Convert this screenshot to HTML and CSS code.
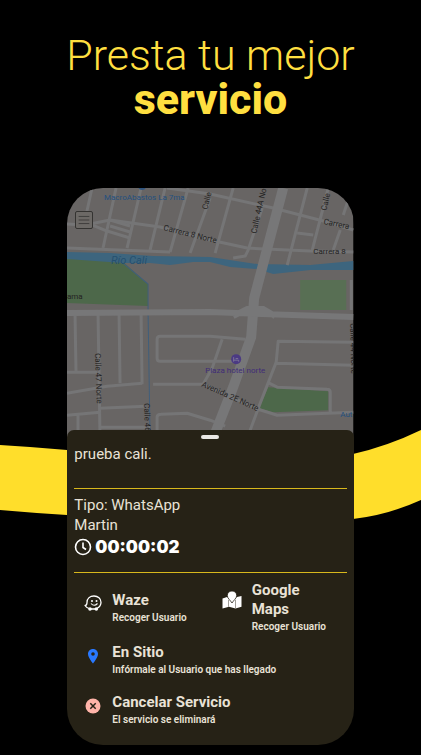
FILE: index.html
```
<!DOCTYPE html>
<html lang="es">
<head>
    <meta charset="UTF-8">
    <meta name="viewport" content="width=device-width, initial-scale=1.0">
    <title>Presta tu mejor servicio</title>
    <link rel="stylesheet" href="styles.css">
</head>
<body>
    <h1 class="title">Presta tu mejor <strong>servicio</strong></h1>
    <main class="stage">
        <svg class="band" viewBox="0 0 421 100" preserveAspectRatio="none" aria-hidden="true">
            <path d="M0 16 Q34 18 67 21 C160 32 270 46 353 25 Q388 17 421 1 V71 Q388 86 353 90 C270 106 160 100 67 86 Q34 84 0 81Z" fill="#ffde2b"/>
        </svg>
        <div class="phone">
            <div class="map">
                <svg class="map-canvas" viewBox="0 0 286 250" preserveAspectRatio="xMidYMin slice">
                    <rect width="286" height="250" fill="#686564"/>

                    <!-- parks -->
                    <g fill="#4d684a">
                        <path d="M0 70 L56 74 L81 96 V118 L0 115Z"/>
                        <path d="M201 199 L261 203 V222 L206 224 L192 220Z"/>
                        <path d="M233 92 H279 V122 H233Z" fill="#586f54"/>
                    </g>

                    <!-- river -->
                    <path d="M0 64 L43 65 L86 68 L143 69 L190 76 L243 77 L286 73 V82 L243 82 L206 86 L190 81 L163 79 L143 74 L126 74 L103 77 L83 75 L56 75 L0 71Z" fill="#3d657e"/>
                    <path d="M56 75 L81 96 V124 L83 250" fill="none" stroke="#405f7c" stroke-width="1"/>

                    <!-- streets -->
                    <g fill="none" stroke="#757576" stroke-width="3" stroke-linejoin="round">
                        <path d="M25 0 L18 32 M49 0 L36 60 M74 0 L60 60 M98 0 L83 62 M121 0 L103 64 M143 10 L123 65"/>
                        <path d="M0 36 L18 37 L43 32 L93 39 L143 52 L180 60 L243 63 L286 64"/>
                        <path d="M18 34 L40 43 L63 50 M43 38 L63 44 M43 32 L63 38"/>
                        <path d="M0 60 L103 64 M100 0 L143 6 L206 20 L256 33 L286 42"/>
                        <path d="M166 0 L148 65 M195 20 L181 62 L178 68 L166 70 M240 0 L220 77 M261 0 L245 62 M281 12 L276 27 M273 42 L266 62 M230 45 L246 47 M284 92 V122"/>
                        <path d="M8 125 L9 184 M31 125 L33 250 M52 125 L53 195 M74 125 L75 196"/>
                        <path d="M0 184 H30 M0 205 L40 198 L75 195 M0 227 L33 224 M33 220 L78 218 M11 226 V250 M33 239 H83"/>
                        <path d="M178 151 L143 148 H93 Q90 148 90 151 V170 Q90 173 93 173 H172 M86 196 H136 L145 180 L155 151"/>
                        <path d="M90 250 V229 Q90 226 94 226 L120 225 L143 232 L158 238 M136 196 L193 222"/>
                        <path d="M180 250 L193 215 L209 174 L211 153 L286 154 M209 175 L286 177"/>
                        <path d="M200 194 L210 199 L260 201 Q263 201 263 204 V224 M191 221 L210 227 L286 224"/>
                    </g>
                    <path d="M216 0 L187 110 L184 149 L166 199 L146 250" fill="none" stroke="#777778" stroke-width="10"/>
                    <path d="M0 125 L143 124 L286 129 M166 128 L180 121 H196 L208 128" fill="none" stroke="#777778" stroke-width="6"/>

                    <!-- labels -->
                    <g class="map-label">
                        <text transform="translate(96 42) rotate(14)">Carrera 8 Norte</text>
                        <text transform="translate(140 22) rotate(-75)">Calle</text>
                        <text transform="translate(189 46) rotate(-77)">Calle 44A No</text>
                        <text transform="translate(259 23) rotate(-77)">Calle</text>
                        <text transform="translate(256 36) rotate(11)">Carrera</text>
                        <text x="246" y="66">Carrera 8</text>
                        <text x="0" y="111">ama</text>
                        <text transform="translate(28 165) rotate(88)">Calle 47 Norte</text>
                        <text transform="translate(77 215) rotate(88)">Calle 46</text>
                        <text transform="translate(283 135) rotate(89)">Calle 44 Norte</text>
                        <text transform="translate(134 198) rotate(24)">Avenida 2E Norte</text>
                        <text class="place" x="37" y="12">MacroAbastos La 7ma</text>
                        <text class="place" x="273" y="229">Aut</text>
                        <text class="hotel" x="138" y="185">Plaza hotel norte</text>
                        <text class="river" x="44" y="76">Río Cali</text>
                    </g>
                    <circle cx="75" cy="-2" r="4" fill="#2f5580"/>
                    <circle cx="169" cy="171" r="5" fill="#4b3a83"/>
                    <path d="M166.500 169 V173.500 M166.500 172 H171.500 V173.500 M168.500 170.300 H171" stroke="#85809a" stroke-width=".8" fill="none"/>
                </svg>
                <button class="menu-button" aria-label="Menú">
                    <svg viewBox="0 0 18 18" aria-hidden="true"><path d="M3 5H15M3 9H15M3 13H15" stroke="#3b3a38" stroke-width="1"/></svg>
                </button>
            </div>

            <section class="sheet">
                <div class="handle"></div>
                <p class="address">prueba cali.</p>
                <div class="details">
                    <p>Tipo: WhatsApp</p>
                    <p>Martin</p>
                    <div class="timer">
                        <svg viewBox="0 0 18 18" aria-hidden="true">
                            <circle cx="9" cy="9" r="7.5" fill="none" stroke="#fff" stroke-width="1.6"/>
                            <path d="M9 4.5V9.5L12 11.5" fill="none" stroke="#fff" stroke-width="1.6"/>
                        </svg>
                        <time>00:00:02</time>
                    </div>
                </div>
                <div class="actions">
                    <button class="action">
                        <svg viewBox="0 0 18 18" aria-hidden="true">
                            <path d="M5 14.5C3.500 14 2 13 1 11.500C2.500 11.500 3 10.500 3 8.500C3 4.500 6 2 10 2C14 2 17 4.800 17 8.300C17 11 15.500 13.300 13 14.300M7 15H11" fill="none" stroke="#fff" stroke-width="1.300" stroke-linejoin="round"/>
                            <circle cx="6" cy="15" r="1.800" fill="#fff"/>
                            <circle cx="12.300" cy="15" r="1.800" fill="#fff"/>
                            <circle cx="8" cy="7" r="1" fill="#fff"/>
                            <circle cx="12.500" cy="7" r="1" fill="#fff"/>
                            <path d="M7 9.500Q10.200 13 13.500 9.500" fill="none" stroke="#fff" stroke-width="1.100"/>
                        </svg>
                        <span class="action-text"><strong>Waze</strong><small>Recoger Usuario</small></span>
                    </button>
                    <button class="action">
                        <svg class="wide" viewBox="0 0 20 18" aria-hidden="true">
                            <path d="M.5 7.500L5 6L10 9L15 6L19.500 5V15.800L13.500 17.500L7 15.800L.5 17.500Z" fill="#fff"/>
                            <path d="M10 0C7.200 0 5.300 2 5.300 4.500C5.300 7.200 8.500 9.500 10 12C11.500 9.500 14.700 7.200 14.700 4.500C14.700 2 12.800 0 10 0Z" fill="#fff" stroke="#262216" stroke-width=".8"/>
                            <path d="M6.500 9V15.800M13.500 9V17.300" stroke="#77736a" stroke-width=".7"/>
                        </svg>
                        <span class="action-text"><strong>Google Maps</strong><small>Recoger Usuario</small></span>
                    </button>
                    <button class="action full">
                        <svg viewBox="0 0 18 18" aria-hidden="true">
                            <path d="M9 2C6 2 4 4.200 4 7C4 10.500 9 16.500 9 16.500C9 16.500 14 10.500 14 7C14 4.200 12 2 9 2ZM9 5.200A1.800 1.800 0 1 1 9 8.800A1.800 1.800 0 1 1 9 5.200Z" fill="#2979ff" fill-rule="evenodd"/>
                        </svg>
                        <span class="action-text"><strong>En Sitio</strong><small>Infórmale al Usuario que has llegado</small></span>
                    </button>
                    <button class="action full">
                        <svg viewBox="0 0 18 18" aria-hidden="true">
                            <circle cx="9" cy="9" r="7.500" fill="#ffb4a9"/>
                            <path d="M6.300 6.300L11.700 11.700M11.700 6.300L6.300 11.700" stroke="#262216" stroke-width="1.500"/>
                        </svg>
                        <span class="action-text"><strong>Cancelar Servicio</strong><small>El servicio se eliminará</small></span>
                    </button>
                </div>
            </section>
        </div>
    </main>
</body>
</html>
```
FILE: styles.css
```
* {
    box-sizing: border-box;
}

body {
    margin: 0;
    background-color: #000;
    font-family: Roboto, 'Liberation Sans', sans-serif;
    overflow-x: hidden;
}

h1,
p {
    margin: 0;
}

.title {
    padding-top: 33px;
    color: #ffdf40;
    font-size: 43px;
    line-height: 44px;
    font-weight: 300;
    text-align: center;
}

.title strong {
    display: block;
    font-weight: 800;
}

.stage {
    position: relative;
    margin-top: 67px;
}

.band {
    position: absolute;
    top: 241px;
    left: 0;
    width: 100%;
    height: 100px;
}

.phone {
    position: relative;
    width: 68%;
    margin: 0 auto;
    border-radius: 36px;
    overflow: hidden;
}

.map {
    height: 242px;
    position: relative;
}

.map-canvas {
    display: block;
    width: 100%;
    height: 250px;
}

.map-label {
    font-size: 8px;
    fill: #242322;
}

.map-label .place {
    fill: #24507f;
}

.map-label .hotel {
    fill: #402c78;
}

.map-label .river {
    font-size: 11px;
    font-style: italic;
    fill: #25506f;
}

.menu-button {
    position: absolute;
    top: 23px;
    left: 8px;
    width: 18px;
    height: 18px;
    padding: 0;
    border: 1px solid #343331;
    border-radius: 2px;
    background-color: #6c6966;
}

.menu-button svg {
    display: block;
    width: 100%;
}

.sheet {
    position: relative;
    padding: 5px 7px 10px;
    border-radius: 7px 7px 0 0;
    background-color: #262216;
    color: #e9e2d6;
    font-size: 15px;
    line-height: 20px;
}

.handle {
    width: 18px;
    height: 4px;
    margin: 0 auto 5px;
    border-radius: 2px;
    background-color: #e9e7e4;
}

.address {
    height: 45px;
    border-bottom: 1px solid #d8b81c;
}

.details {
    padding: 6px 0 13px;
    border-bottom: 1px solid #d8b81c;
}

.timer {
    display: flex;
    align-items: center;
    gap: 3px;
    color: #fff;
    font-family: Inter, 'Open Sans', sans-serif;
    font-size: 17px;
    line-height: 24px;
    font-weight: 900;
}

.timer svg {
    width: 18px;
    height: 18px;
}

.actions {
    display: grid;
    grid-template-columns: 5fr 4fr;
    row-gap: 8px;
    padding: 8px 15px 0 10px;
}

.action {
    display: flex;
    align-items: center;
    gap: 10px;
    padding: 0;
    border: none;
    background: none;
    color: #e9e2d6;
    font-family: inherit;
    text-align: left;
    cursor: pointer;
}

.action.full {
    grid-column: 1 / -1;
    margin-bottom: 7px;
}

.action svg {
    width: 18px;
    height: 18px;
    flex: none;
    margin-bottom: 10px;
}

.action .wide {
    width: 20px;
    margin-bottom: 16px;
}

.action-text {
    display: flex;
    flex-direction: column;
}

.action strong {
    font-size: 15px;
    line-height: 19px;
}

.action small {
    font-size: 10px;
    line-height: 16px;
    font-weight: 600;
}
```
